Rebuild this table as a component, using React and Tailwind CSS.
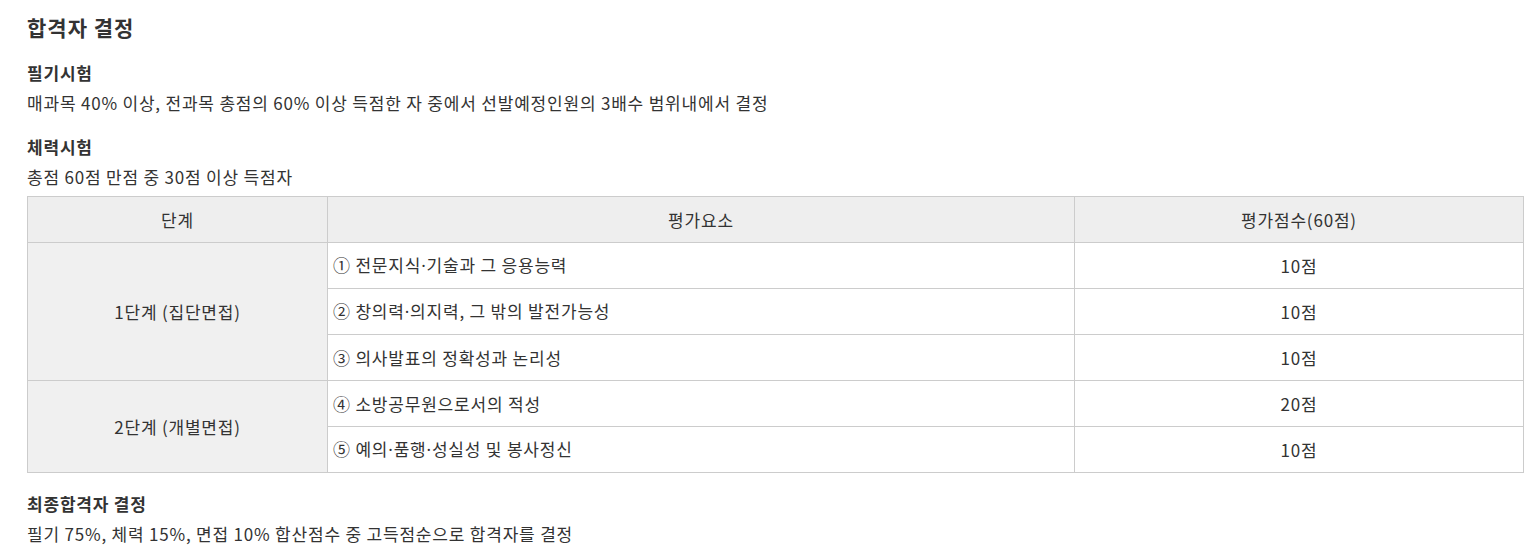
const Dot = () => <span style={{ fontFamily: '"Noto Sans", sans-serif' }}>·</span>;

export default function App() {
  const font = { fontFamily: '"Noto Sans CJK KR", "Noto Sans", sans-serif' };
  const td = "border border-[#cccccc]";
  return (
    <div className="bg-white pl-[27px] pr-[8px] pt-[12px] text-[#333333] tracking-[0.8px]" style={font}>
      <h2 className="text-[21px] font-bold leading-[30px] tracking-[1px] text-[#333333]">합격자 결정</h2>
      <div className="mt-[16px] text-[17px] font-bold leading-[30px]">필기시험</div>
      <p className="text-[17px] leading-[30px]">매과목 40% 이상, 전과목 총점의 60% 이상 득점한 자 중에서 선발예정인원의 3배수 범위내에서 결정</p>
      <div className="mt-[14px] text-[17px] font-bold leading-[30px]">체력시험</div>
      <p className="text-[17px] leading-[30px]">총점 60점 만점 중 30점 이상 득점자</p>
      <table className="mt-[4px] w-[1497px] border-collapse text-[17px] text-[#333333]">
        <colgroup>
          <col className="w-[300px]" />
          <col className="w-[747px]" />
          <col />
        </colgroup>
        <thead>
          <tr className="h-[46px] bg-[#eeeeee]">
            <th className={`${td} font-normal`}>단계</th>
            <th className={`${td} font-normal`}>평가요소</th>
            <th className={`${td} font-normal`}>평가점수(60점)</th>
          </tr>
        </thead>
        <tbody>
          <tr className="h-[46px]">
            <td rowSpan={3} className={`${td} bg-[#f0f0f0] text-center`}>1단계 (집단면접)</td>
            <td className={`${td} px-[5px]`}>① 전문지식<Dot />기술과 그 응용능력</td>
            <td className={`${td} text-center`}>10점</td>
          </tr>
          <tr className="h-[46px]">
            <td className={`${td} px-[5px]`}>② 창의력<Dot />의지력, 그 밖의 발전가능성</td>
            <td className={`${td} text-center`}>10점</td>
          </tr>
          <tr className="h-[46px]">
            <td className={`${td} px-[5px]`}>③ 의사발표의 정확성과 논리성</td>
            <td className={`${td} text-center`}>10점</td>
          </tr>
          <tr className="h-[46px]">
            <td rowSpan={2} className={`${td} bg-[#f0f0f0] text-center`}>2단계 (개별면접)</td>
            <td className={`${td} px-[5px]`}>④ 소방공무원으로서의 적성</td>
            <td className={`${td} text-center`}>20점</td>
          </tr>
          <tr className="h-[46px]">
            <td className={`${td} px-[5px]`}>⑤ 예의<Dot />품행<Dot />성실성 및 봉사정신</td>
            <td className={`${td} text-center`}>10점</td>
          </tr>
        </tbody>
      </table>
      <div className="mt-[16px] text-[17px] font-bold leading-[30px]">최종합격자 결정</div>
      <p className="text-[17px] leading-[30px]">필기 75%, 체력 15%, 면접 10% 합산점수 중 고득점순으로 합격자를 결정</p>
    </div>
  );
}
